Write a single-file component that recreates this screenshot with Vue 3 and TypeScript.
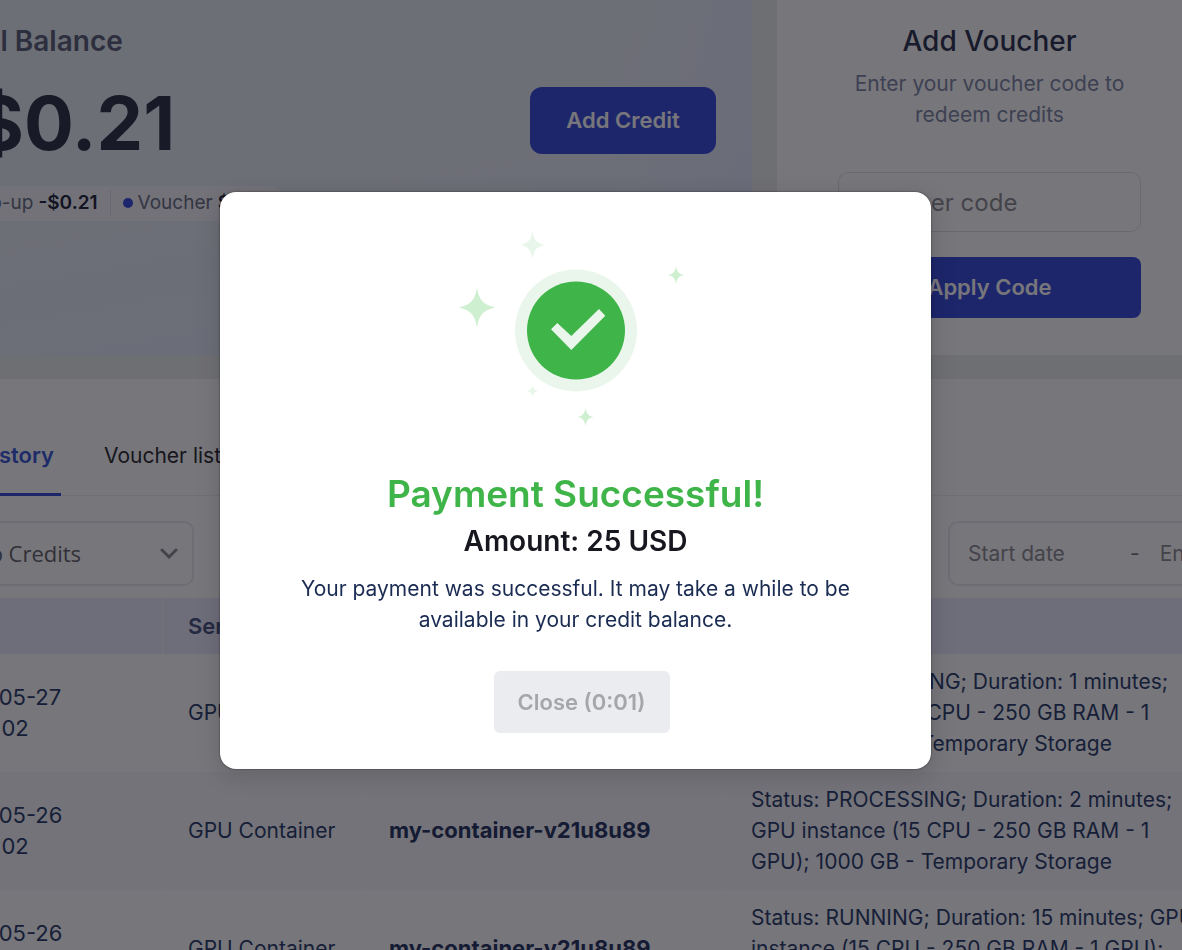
<script setup lang="ts">
import { ref } from 'vue'

interface Entry {
  date: string
  service: string
  name: string
  detail: string
}

const voucherCode = ref('')
const creditType = ref('topup')
const startDate = ref('')
const endDate = ref('')

const entries: Entry[] = [
  {
    date: '2024-05-27 05:09:02',
    service: 'GPU Container',
    name: 'my-container-v21u8u89',
    detail:
      'Status: PROCESSING; Duration: 1 minutes; GPU instance (15 CPU - 250 GB RAM - 1 GPU); 1000 GB - Temporary Storage',
  },
  {
    date: '2024-05-26 05:09:02',
    service: 'GPU Container',
    name: 'my-container-v21u8u89',
    detail:
      'Status: PROCESSING; Duration: 2 minutes; GPU instance (15 CPU - 250 GB RAM - 1 GPU); 1000 GB - Temporary Storage',
  },
  {
    date: '2024-05-26 05:09:02',
    service: 'GPU Container',
    name: 'my-container-v21u8u89',
    detail:
      'Status: RUNNING; Duration: 15 minutes; GPU instance (15 CPU - 250 GB RAM - 1 GPU); 1000 GB - Temporary Storage',
  },
]

const star =
  'M0-1C.12-.35.35-.14 1 0C.35.14.12.35 0 1C-.12.35-.35.14-1 0C-.35-.14-.12-.35 0-1Z'
const sparkles = [
  { x: 477, y: 307.5, w: 18, h: 20, fill: '#cfefd1' },
  { x: 532.5, y: 245, w: 12, h: 14, fill: '#e9f6ea' },
  { x: 676, y: 275, w: 8, h: 9, fill: '#cfefd1' },
  { x: 532.5, y: 391, w: 6, h: 6, fill: '#e9f6ea' },
  { x: 585.5, y: 417, w: 8, h: 9, fill: '#cfefd1' },
]
</script>

<template>
  <div class="viewport">
    <main class="page">
      <div class="top">
        <section class="balance">
          <h2>Total Balance</h2>
          <div class="balance-row">
            <strong class="sum">-$0.21</strong>
            <button type="button" class="primary add">Add Credit</button>
          </div>
          <div class="pill">
            <span class="part"><i class="dot"></i>Top-up <b>-$0.21</b></span>
            <span class="part"><i class="dot"></i>Voucher <b>$0.00</b></span>
          </div>
        </section>
        <section class="voucher">
          <h2>Add Voucher</h2>
          <p>Enter your voucher code to redeem credits</p>
          <input v-model="voucherCode" type="text" placeholder="Voucher code" aria-label="Voucher code" />
          <button type="button" class="primary">Apply Code</button>
        </section>
      </div>

      <section class="history">
        <nav class="tabs">
          <button type="button" class="tab active">Billing history</button>
          <button type="button" class="tab">Voucher list</button>
        </nav>
        <div class="filters">
          <div class="select">
            <select v-model="creditType" aria-label="Credit type">
              <option value="topup">Top-up Credits</option>
            </select>
            <svg viewBox="0 0 18 12" width="18" height="12" aria-hidden="true">
              <path d="M2 2L9 9L16 2" fill="none" stroke="#8f8f94" stroke-width="3" stroke-linecap="round" />
            </svg>
          </div>
          <div class="range">
            <input v-model="startDate" type="text" placeholder="Start date" aria-label="Start date" />
            <span>-</span>
            <input v-model="endDate" type="text" placeholder="End date" aria-label="End date" />
          </div>
        </div>
        <table>
          <colgroup>
            <col class="c-date" />
            <col class="c-service" />
            <col class="c-name" />
            <col />
          </colgroup>
          <thead>
            <tr>
              <th>Date</th>
              <th>Service</th>
              <th>Name</th>
              <th></th>
            </tr>
          </thead>
          <tbody>
            <tr v-for="(e, i) in entries" :key="i">
              <td class="date">{{ e.date }}</td>
              <td class="service">{{ e.service }}</td>
              <td><b>{{ e.name }}</b></td>
              <td>{{ e.detail }}</td>
            </tr>
          </tbody>
        </table>
      </section>
    </main>

    <div class="overlay">
      <div class="modal" role="dialog" aria-modal="true" aria-labelledby="paid">
        <svg class="art" viewBox="440 220 271 210" width="271" height="210" aria-hidden="true">
          <circle cx="576" cy="330.5" r="61" fill="#eaf6eb" />
          <circle cx="576" cy="330.5" r="49" fill="#3eb449" />
          <path d="M551 329.3L557.3 323L571.3 336L599 309L605.3 315.7L571.3 350Z" fill="#eaf6eb" />
          <path
            v-for="(s, i) in sparkles"
            :key="i"
            :d="star"
            :fill="s.fill"
            :transform="`translate(${s.x} ${s.y}) scale(${s.w} ${s.h})`"
          />
        </svg>
        <h1 id="paid">Payment Successful!</h1>
        <h3>Amount: 25 USD</h3>
        <p>Your payment was successful. It may take a while to be available in your credit balance.</p>
        <button type="button" class="close" disabled>Close (0:01)</button>
      </div>
    </div>
  </div>
</template>

<style>
body {
  margin: 0;
  overflow: hidden;
}
</style>

<style scoped>
* {
  box-sizing: border-box;
}
.viewport {
  height: 100vh;
  overflow: hidden;
  background: #ecf0ee;
  font-family: Inter, 'Liberation Sans', sans-serif;
  font-size: 21px;
  line-height: 31px;
  color: #2b3f6b;
}
button,
input,
select {
  font: inherit;
  color: inherit;
}
h1,
h2,
h3,
p {
  margin: 0;
}
.page {
  margin: 0 -21px 0 -92px;
}
.top {
  display: grid;
  grid-template-columns: 1fr 426px;
  gap: 25px;
}
.balance {
  padding: 21px 36px 36px 33px;
  background:
    linear-gradient(100deg, transparent 78%, #e2e8fb 100%),
    linear-gradient(170deg, #e9f0f6 0%, #e9eff5 45%, #e2eafa 100%);
}
.balance h2 {
  font-size: 28px;
  line-height: 40px;
  font-weight: 600;
  color: #5b6278;
}
.balance-row {
  display: flex;
  justify-content: space-between;
  align-items: flex-start;
  margin-top: 26px;
}
.sum {
  font-size: 74px;
  line-height: 72px;
  font-weight: 700;
  color: #2e3346;
}
.primary {
  border: 0;
  border-radius: 8px;
  background: #3a4edc;
  color: #fff;
  font-size: 22px;
  font-weight: 600;
}
.add {
  width: 186px;
  height: 67px;
  border-radius: 12px;
}
.pill {
  display: inline-flex;
  margin-top: 27px;
  padding: 4px 0 6px;
  border-radius: 18px;
  background: #f5f6fa;
  font-size: 19px;
  line-height: 25px;
  color: #6b7183;
}
.part {
  display: flex;
  align-items: center;
  gap: 5px;
  padding: 0 12px;
}
.part + .part {
  border-left: 1px solid #dcdfe8;
}
.part b {
  color: #23263a;
  font-weight: 600;
}
.dot {
  width: 10px;
  height: 10px;
  border-radius: 50%;
  background: #3a4edc;
}
.voucher {
  display: flex;
  flex-direction: column;
  padding: 21px 62px 37px 61px;
  background: #fff;
  text-align: center;
}
.voucher h2 {
  font-size: 28px;
  line-height: 40px;
  font-weight: 500;
  color: #2e3550;
}
.voucher p {
  margin-top: 7px;
  color: #7f8aa5;
}
.voucher input {
  height: 60px;
  margin-top: 42px;
  padding: 0 20px;
  border: 1px solid #dfe3e6;
  border-radius: 10px;
  background: #fff;
  font-size: 24px;
}
input::placeholder {
  color: #8f8f93;
  opacity: 1;
}
.voucher .primary {
  height: 61px;
  margin-top: 25px;
}
.history {
  margin-top: 24px;
  padding-top: 38px;
  background: #fff;
}
.tabs {
  display: flex;
  gap: 43px;
  height: 79px;
  border-bottom: 1px solid #f0f0f0;
}
.tab {
  height: 79px;
  padding: 0;
  border: 0;
  border-bottom: 3px solid transparent;
  background: none;
  color: #2c2c30;
}
.tab.active {
  width: 153px;
  padding-right: 7px;
  border-color: #3a4edc;
  color: #3a5bd8;
  font-size: 22px;
  font-weight: 600;
  text-align: right;
  white-space: nowrap;
}
.filters {
  display: flex;
  justify-content: space-between;
  padding: 25px 0 12px 20px;
}
.select {
  display: flex;
  align-items: center;
  width: 266px;
  height: 65px;
  padding-right: 14px;
  border: 2px solid #ececee;
  border-radius: 10px;
}
.select select {
  flex: 1;
  height: 61px;
  padding: 0;
  border: 0;
  background: none;
  appearance: none;
  font-family: 'Open Sans', 'Noto Sans', sans-serif;
  font-size: 22px;
  color: #66666b;
}
.range {
  display: flex;
  align-items: center;
  flex: 0 0 255px;
  min-width: 0;
  height: 65px;
  padding-left: 18px;
  border: 2px solid #ececee;
  border-right: 0;
  border-radius: 10px 0 0 10px;
  color: #77777b;
}
.range input {
  flex: 0 0 162px;
  width: 162px;
  padding: 0;
  border: 0;
  background: none;
}
.range input:last-child {
  flex: 1 1 0;
  width: 0;
  min-width: 0;
  margin-left: 20px;
}
table {
  width: 1318px;
  table-layout: fixed;
  border-collapse: separate;
  border-spacing: 0;
}
.c-date {
  width: 254px;
}
.c-service {
  width: 201px;
}
.c-name {
  width: 362px;
}
th {
  height: 56px;
  padding: 0 24px;
  border-left: 2px solid #f4f4fc;
  background: #ebecfc;
  color: #4b5580;
  font-size: 22px;
  font-weight: 600;
  text-align: left;
}
td {
  padding: 12px 24px 13px 25px;
  border-left: 1px solid transparent;
}
tbody tr:nth-child(even) td {
  background: #f9f9fa;
  border-left-color: #fbfbfd;
}
td b {
  color: #26365f;
  font-size: 22px;
  font-weight: 700;
}
td.date {
  padding-right: 90px;
  font-size: 22px;
}
td.service {
  padding-right: 0;
  white-space: nowrap;
}
.overlay {
  position: fixed;
  inset: 0;
  display: flex;
  align-items: center;
  justify-content: center;
  padding: 11px 31px 0 0;
  background: rgba(8, 6, 15, 0.55);
}
.modal {
  display: flex;
  flex-direction: column;
  align-items: center;
  width: 711px;
  padding: 28px 64px 36px;
  border-radius: 16px;
  background: #fff;
  box-shadow: 0 0 2px rgba(0, 0, 0, 0.6), 0 6px 24px rgba(0, 0, 0, 0.16);
  text-align: center;
  color: #1b2c53;
}
.art {
  display: block;
}
.modal h1 {
  margin-top: 41px;
  font-size: 37px;
  line-height: 46px;
  font-weight: 600;
  color: #3eb449;
}
.modal h3 {
  margin-top: 4px;
  font-size: 28px;
  line-height: 40px;
  font-weight: 600;
  color: #17171f;
}
.modal p {
  max-width: 575px;
  margin-top: 12px;
}
.close {
  width: 176px;
  height: 62px;
  margin: 36px 0 0 12px;
  border: 0;
  border-radius: 6px;
  background: #ebecf0;
  color: #a5a6a9;
  font-size: 22px;
  font-weight: 600;
}
</style>
